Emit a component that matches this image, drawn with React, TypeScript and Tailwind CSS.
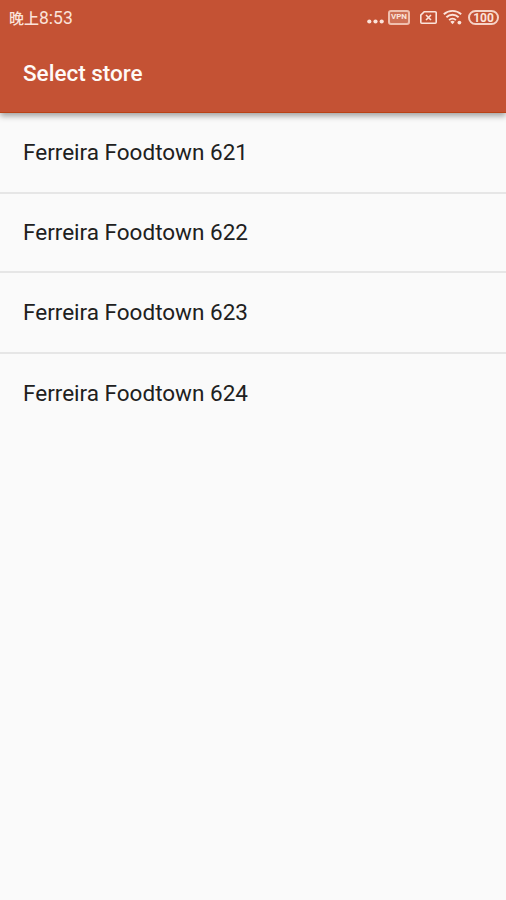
import React from 'react';

const stores = [
  'Ferreira Foodtown 621',
  'Ferreira Foodtown 622',
  'Ferreira Foodtown 623',
  'Ferreira Foodtown 624',
];

const StatusBar: React.FC = () => (
  <div className="flex h-9 items-center justify-between pl-[9px] pr-[7px] text-[#fbe3da]">
    <span className="pt-0.5 font-['Roboto','Noto_Sans_CJK_SC',sans-serif] text-[17.5px] leading-none whitespace-nowrap">
      <span className="text-[15px] font-medium">晚上</span>8:53
    </span>

    <div className="flex items-center">
      {/* More notifications */}
      <svg className="mt-[7px]" width="17" height="5" viewBox="0 0 17 5" fill="currentColor" aria-hidden="true">
        <circle cx="2.3" cy="2.5" r="2.1" />
        <circle cx="8.5" cy="2.5" r="2.1" />
        <circle cx="14.7" cy="2.5" r="2.1" />
      </svg>

      {/* VPN */}
      <span className="ml-1 flex h-[15px] w-[22px] -translate-y-px items-center justify-center rounded-[3px] border-2 border-[#f0bfae] bg-[#cf7055] font-['Roboto',sans-serif] text-[8px] leading-none font-bold">
        VPN
      </span>

      {/* No SIM */}
      <svg className="ml-[10px] -translate-y-px" width="17" height="13" viewBox="0 0 17 13" fill="none" stroke="currentColor" strokeWidth="1.6" aria-hidden="true">
        <path d="M4.2 .8H15.2a1 1 0 0 1 1 1V11.2a1 1 0 0 1-1 1H1.8a1 1 0 0 1-1-1V4.2z" />
        <path d="M6 4l5 5M11 4l-5 5" />
      </svg>

      {/* Wi-Fi */}
      <svg className="ml-1.5 -translate-y-px" width="20" height="16" viewBox="0 0 20 16" fill="none" stroke="currentColor" strokeWidth="1.9" aria-hidden="true">
        <path d="M.8 5.2a13 13 0 0 1 17.4 0M3.4 8.2a9 9 0 0 1 12.2 0M6.1 11.1a5 5 0 0 1 6.8 0" />
        <path d="M7.3 12.8a3.3 3.3 0 0 1 4.4 0l-2.2 2.4z" fill="currentColor" stroke="none" />
        <circle cx="16.4" cy="13.6" r="1.9" fill="currentColor" stroke="none" />
      </svg>

      {/* Battery */}
      <span className="ml-[5px] flex h-[15px] w-[31px] -translate-y-px items-center justify-center rounded-full border-2 border-[#f6d3c7] pt-px font-['Roboto',sans-serif] text-[12px] leading-none font-bold">
        100
      </span>
    </div>
  </div>
);

const App: React.FC = () => (
  <div className="flex h-[900px] w-[506px] flex-col overflow-hidden bg-[#fafafa] font-['Roboto',sans-serif]">
    <header className="relative h-[113px] shrink-0 border-b border-[#b94217] bg-[#c45234] shadow-[0_3px_6px_rgba(0,0,0,0.36)]">
      <StatusBar />
      <h1 className="flex h-[75px] items-center pl-[23px] text-[22.5px] leading-none font-medium text-[#fffaf7]">
        Select store
      </h1>
    </header>

    <ul className="flex flex-col">
      {stores.map((store) => (
        <li
          key={store}
          className="flex h-20 items-center border-b-2 border-[#e6e6e6] pl-[23px] text-[22.5px] leading-none text-[#202020] first:h-[81px] nth-2:h-[79px] nth-3:h-[81px] last:border-b-0 last:pb-0.5"
        >
          {store}
        </li>
      ))}
    </ul>
  </div>
);

export default App;
